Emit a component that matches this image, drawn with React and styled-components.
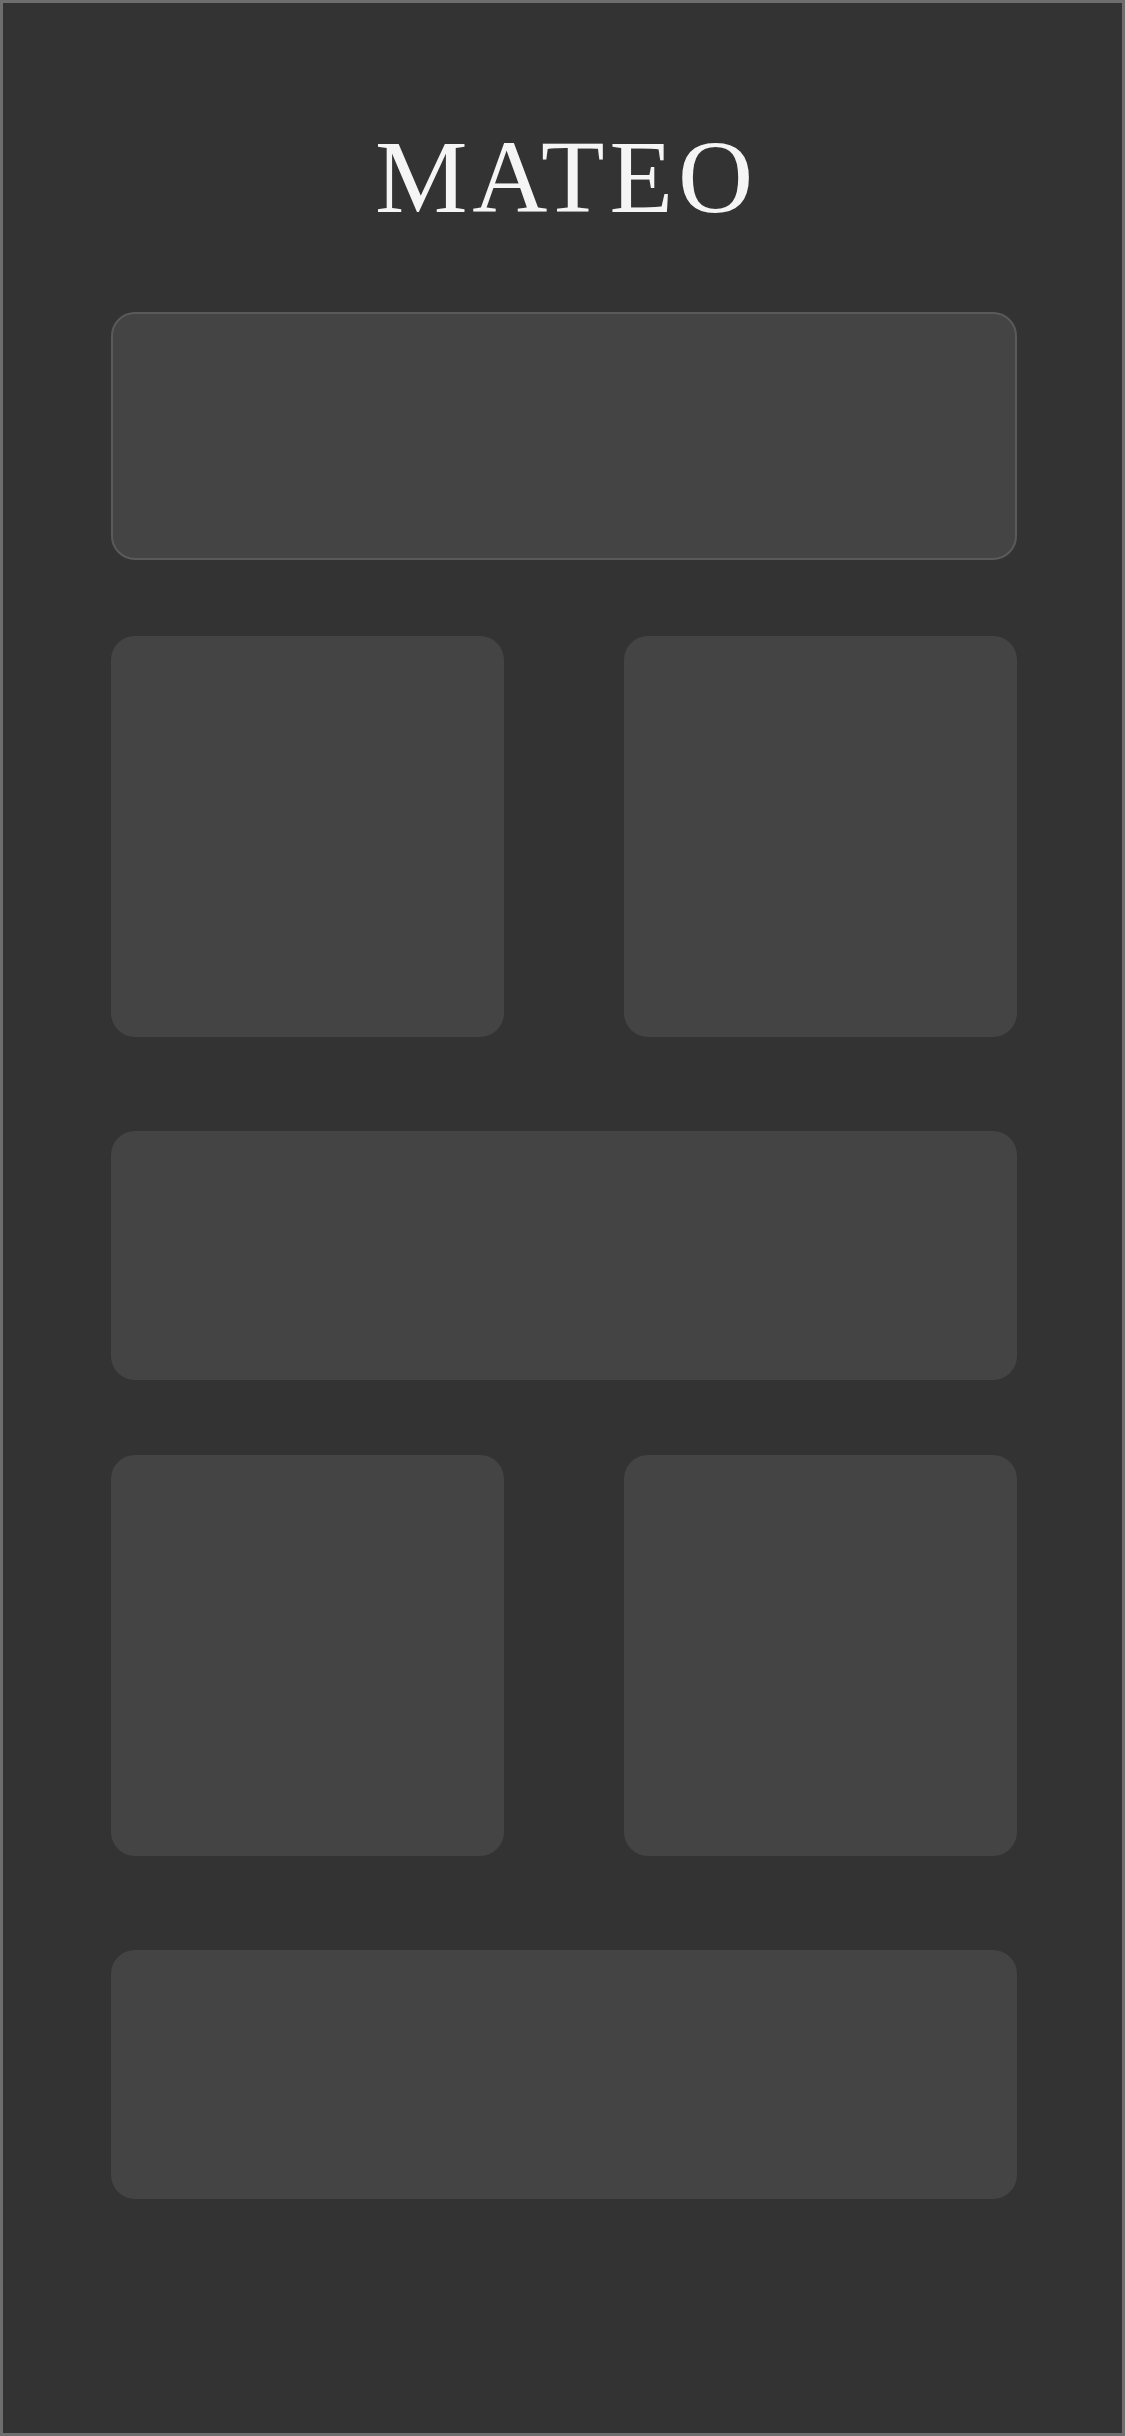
import styled, { createGlobalStyle } from 'styled-components';

const GlobalStyle = createGlobalStyle`
    html, body {
        margin: 0;
        padding: 0;
        background: #333333;
    }
`;

const Frame = styled.div`
    box-sizing: border-box;
    width: 1125px;
    height: 2436px;
    border: 3px solid #6e6e6e;
    background-color: #333333;
    padding: 122px 105px 0 108px;
    display: flex;
    flex-direction: column;
`;

const Title = styled.h1`
    margin: 0;
    padding-left: 5px;
    font-family: "Liberation Serif", "Times New Roman", Times, serif;
    font-weight: 400;
    font-size: 104px;
    line-height: 104px;
    letter-spacing: 5px;
    color: #f5f5f5;
    text-align: center;
`;

const Sections = styled.div`
    display: flex;
    flex-direction: column;
    margin-top: 83px;
`;

const Panel = styled.div`
    box-sizing: border-box;
    height: ${props => props.$height}px;
    margin-top: ${props => props.$gap || 0}px;
    background-color: #444444;
    border-radius: 24px;
    border: ${props => props.$outlined ? '2px solid #5a5a5a' : 'none'};
`;

const Pair = styled.div`
    display: grid;
    grid-template-columns: 393px 393px;
    column-gap: 120px;
    margin-top: ${props => props.$gap}px;
`;

const App = () => {
    return (
        <>
            <GlobalStyle />
            <Frame>
                <Title>MATEO</Title>
                <Sections>
                    <Panel $height={248} $outlined />
                    <Pair $gap={76}>
                        <Panel $height={401} />
                        <Panel $height={401} />
                    </Pair>
                    <Panel $height={249} $gap={94} />
                    <Pair $gap={75}>
                        <Panel $height={401} />
                        <Panel $height={401} />
                    </Pair>
                    <Panel $height={249} $gap={94} />
                </Sections>
            </Frame>
        </>
    );
}

export default App;
